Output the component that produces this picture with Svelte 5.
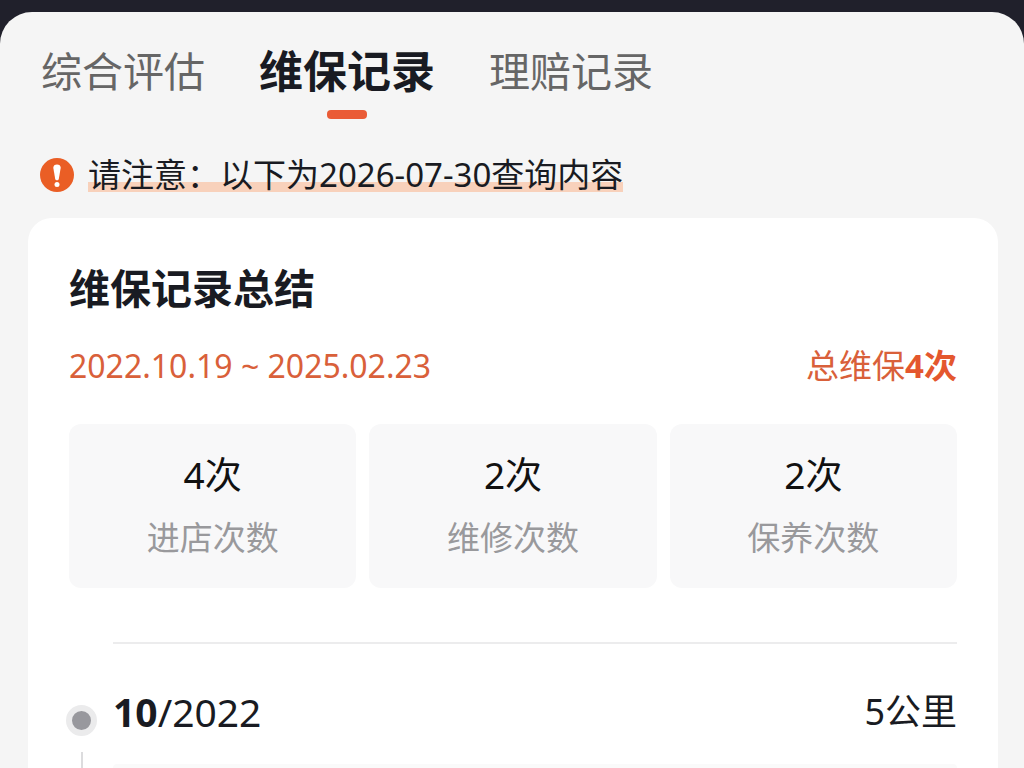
<script>
  const tabs = ['综合评估', '维保记录', '理赔记录'];
  let active = $state('维保记录');

  const stats = [
    { count: 4, label: '进店次数' },
    { count: 2, label: '维修次数' },
    { count: 2, label: '保养次数' },
  ];
</script>

<main class="sheet">
  <nav class="tabs" aria-label="报告">
    {#each tabs as tab}
      <button type="button" class:active={tab === active} onclick={() => (active = tab)}>{tab}</button>
    {/each}
  </nav>

  <p class="notice">
    <svg class="alert" viewBox="0 0 34 34" aria-hidden="true">
      <circle cx="17" cy="17" r="17" fill="#ea5e25" />
      <path d="M13.300 9.800c0-2.200 1.500-3.400 3.700-3.400s3.700 1.200 3.700 3.400L18.800 21c-.3 1.700-3.300 1.700-3.600 0z" fill="#fff" />
      <circle cx="17" cy="26.400" r="2.500" fill="#fff" />
    </svg>
    <span class="marked">请注意：以下为2026-07-30查询内容</span>
  </p>

  <section class="card">
    <h2>维保记录总结</h2>
    <div class="summary">
      <span class="period">2022.10.19 ~ 2025.02.23</span>
      <span class="total">总维保<strong>4次</strong></span>
    </div>

    <div class="stats">
      {#each stats as stat}
        <div class="stat">
          <span class="value">{stat.count}次</span>
          <span class="label">{stat.label}</span>
        </div>
      {/each}
    </div>

    <div class="record">
      <div class="rail">
        <span class="dot"></span>
        <span class="line"></span>
      </div>
      <div class="entry">
        <div class="head">
          <span class="date"><strong>10</strong>/2022</span>
          <span class="distance">5公里</span>
        </div>
        <div class="detail"></div>
      </div>
    </div>
  </section>
</main>

<style>
  :global(body) {
    background: #20202b;
  }

  :global(#app) {
    display: flex;
    flex-direction: column;
    box-sizing: border-box;
    min-height: 100vh;
    padding-top: 12px;
  }

  .sheet {
    flex: 1;
    display: flex;
    flex-direction: column;
    background: #f5f5f5;
    border-radius: 32px 32px 0 0;
    color: #191b22;
    font-family: 'Noto Sans', 'Noto Sans CJK SC', sans-serif;
  }

  .tabs {
    display: flex;
    align-items: flex-start;
    gap: 54px;
    padding: 28px 41px 0;
  }

  .tabs button {
    display: flex;
    flex-direction: column;
    align-items: center;
    gap: 8px;
    padding: 0;
    border: 0;
    background: none;
    color: #666;
    font-family: inherit;
    font-size: 41px;
    line-height: 62px;
    white-space: nowrap;
    cursor: pointer;
  }

  .tabs button::after {
    content: '';
    width: 40px;
    height: 9px;
    border-radius: 4px;
  }

  .tabs .active {
    color: #191b22;
    font-size: 44px;
    font-weight: 700;
  }

  .tabs .active::after {
    background: #ea5b36;
  }

  .notice {
    display: flex;
    align-items: center;
    gap: 14px;
    margin: 0;
    padding: 35px 40px 22px;
    font-size: 33px;
    line-height: 42px;
  }

  .alert {
    flex: none;
    width: 34px;
    height: 34px;
  }

  .marked {
    background: linear-gradient(#f8d1bb, #f8d1bb) 0 28px / 100% 10px no-repeat;
  }

  .card {
    flex: 1;
    display: flex;
    flex-direction: column;
    margin: 0 26px 0 28px;
    padding: 40px 41px 0;
    background: #fff;
    border-radius: 24px 24px 0 0;
  }

  h2 {
    margin: 0;
    font-size: 41px;
    line-height: 60px;
  }

  .summary {
    display: flex;
    justify-content: space-between;
    margin: 24px 0 34px;
    color: #d9603a;
    font-size: 33px;
    line-height: 48px;
  }

  .period {
    font-size: 32px;
  }

  .total strong {
    color: #e4572e;
  }

  .stats {
    display: grid;
    grid-template-columns: repeat(3, 1fr);
    gap: 13px;
  }

  .stat {
    display: flex;
    flex-direction: column;
    align-items: center;
    gap: 12px;
    padding: 24px 0 26px;
    background: #f8f8f9;
    border-radius: 12px;
  }

  .value {
    color: #111;
    font-size: 37px;
    line-height: 54px;
  }

  .label {
    color: #99999c;
    font-size: 33px;
    line-height: 48px;
  }

  .record {
    flex: 1;
    display: flex;
    gap: 16px;
    margin: 54px 0 0 -3px;
  }

  .rail {
    display: flex;
    flex-direction: column;
    align-items: center;
    gap: 16px;
    padding-top: 63px;
  }

  .dot {
    box-sizing: border-box;
    width: 31px;
    height: 31px;
    border: 6px solid #ebebec;
    border-radius: 50%;
    background: #98989d;
  }

  .line {
    flex: 1;
    width: 2px;
    min-height: 16px;
    background: #dcdcde;
  }

  .entry {
    flex: 1;
    display: flex;
    flex-direction: column;
    border-top: 2px solid #ececed;
  }

  .head {
    display: flex;
    justify-content: space-between;
    align-items: center;
    padding: 40px 0 24px;
    line-height: 56px;
  }

  .date {
    font-size: 39px;
  }

  .distance {
    font-size: 36px;
  }

  .detail {
    flex: 1;
    background: #fafafa;
    border-radius: 12px 12px 0 0;
  }
</style>
